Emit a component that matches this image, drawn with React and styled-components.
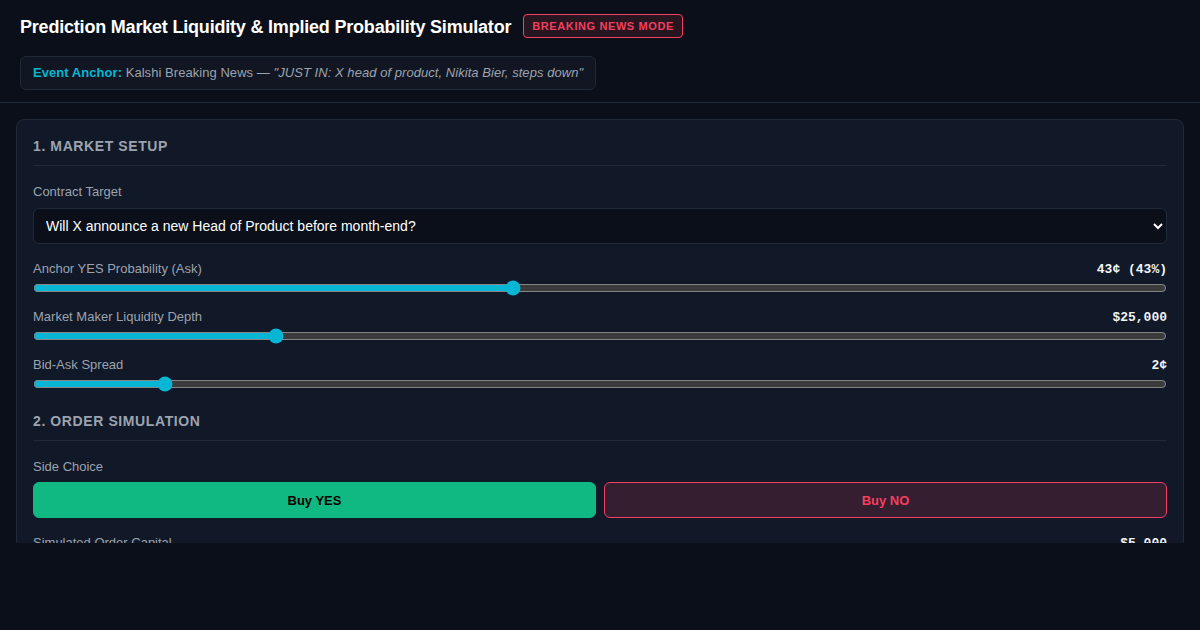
import React, { useState } from 'react';
import styled, { createGlobalStyle } from 'styled-components';

const GlobalStyle = createGlobalStyle`
  * { box-sizing: border-box; }
  body {
    margin: 0;
    background: #0b0f19;
    color: #e5e7eb;
    font-family: "Liberation Sans", Arial, sans-serif;
  }
`;

const App = () => {
  const [side, setSide] = useState('yes');
  const [prob, setProb] = useState(43);
  const [depth, setDepth] = useState(25000);
  const [spread, setSpread] = useState(2);

  return (
    <Page>
      <GlobalStyle />
      <Header>
        <TitleRow>
          <Title>Prediction Market Liquidity &amp; Implied Probability Simulator</Title>
          <Badge>BREAKING NEWS MODE</Badge>
        </TitleRow>
        <Anchor>
          <strong>Event Anchor:</strong> Kalshi Breaking News —{' '}
          <em>"JUST IN: X head of product, Nikita Bier, steps down"</em>
        </Anchor>
      </Header>
      <Main>
        <Panel>
          <SectionTitle>1. Market Setup</SectionTitle>
          <Field>
            <Label>Contract Target</Label>
            <Select defaultValue="a">
              <option value="a">Will X announce a new Head of Product before month-end?</option>
              <option value="b">Will Nikita Bier join another company by Q2?</option>
            </Select>
          </Field>
          <SliderField>
            <LabelRow>
              <Label>Anchor YES Probability (Ask)</Label>
              <Value>{prob}¢ ({prob}%)</Value>
            </LabelRow>
            <Range min={5} max={95} value={prob} onChange={e => setProb(+e.target.value)} />
          </SliderField>
          <SliderField>
            <LabelRow>
              <Label>Market Maker Liquidity Depth</Label>
              <Value>${depth.toLocaleString('en-US')}</Value>
            </LabelRow>
            <Range min={5000} max={100000} step={1000} value={depth} onChange={e => setDepth(+e.target.value)} />
          </SliderField>
          <SliderField>
            <LabelRow>
              <Label>Bid-Ask Spread</Label>
              <Value>{spread}¢</Value>
            </LabelRow>
            <Range min={1} max={10} value={spread} onChange={e => setSpread(+e.target.value)} />
          </SliderField>

          <SectionTitle $spaced>2. Order Simulation</SectionTitle>
          <Field $tight>
            <Label>Side Choice</Label>
            <SideRow>
              <SideButton $kind="yes" $active={side === 'yes'} onClick={() => setSide('yes')}>Buy YES</SideButton>
              <SideButton $kind="no" $active={side === 'no'} onClick={() => setSide('no')}>Buy NO</SideButton>
            </SideRow>
          </Field>
          <SliderField>
            <LabelRow>
              <Label>Simulated Order Capital</Label>
              <Value>$5,000</Value>
            </LabelRow>
            <Range min={100} max={20000} step={100} defaultValue={5000} />
          </SliderField>
        </Panel>
      </Main>
    </Page>
  );
};
export default App;

const Page = styled.div`
  min-height: 630px;
  background: #0b0f19;
`;

const Header = styled.header`
  padding: 14px 20px 12px;
  border-bottom: 1px solid #1f2937;
  display: flex;
  flex-direction: column;
  gap: 18px;
  align-items: flex-start;
`;

const TitleRow = styled.div`
  display: flex;
  align-items: center;
  gap: 12px;
  height: 24px;
`;

const Title = styled.h1`
  margin: 0;
  padding-top: 2px;
  font-size: 18px;
  font-weight: 700;
  letter-spacing: -0.2px;
  color: #ffffff;
`;

const Badge = styled.span`
  font-size: 11px;
  font-weight: 700;
  letter-spacing: 0.6px;
  line-height: 14px;
  color: #f43f5e;
  background: rgba(244, 63, 94, 0.12);
  border: 1px solid #f43f5e;
  border-radius: 4px;
  padding: 4px 8px;
`;

const Anchor = styled.div`
  font-size: 13px;
  line-height: 14px;
  letter-spacing: 0.05px;
  color: #9ca3af;
  background: #111622;
  border: 1px solid #1f2937;
  border-radius: 6px;
  padding: 9px 12px;

  strong { color: #06b6d4; }
  em { color: #9ca3af; }
`;

const Main = styled.main`
  height: 440px;
  overflow: hidden;
  padding: 16px;
`;

const Panel = styled.section`
  background: #111827;
  border: 1px solid #1f2937;
  border-radius: 8px;
  padding: 18px 16px 16px;
`;

const SectionTitle = styled.h2`
  margin: ${p => (p.$spaced ? '21px' : '0')} 0 18px;
  padding-bottom: 11px;
  border-bottom: 1px solid #1f2937;
  font-size: 14px;
  font-weight: 700;
  text-transform: uppercase;
  letter-spacing: 0.6px;
  color: #9ca3af;
`;

const Field = styled.div`
  display: flex;
  flex-direction: column;
  gap: ${p => (p.$tight ? '8px' : '9px')};
  margin-bottom: 17px;
`;

const SliderField = styled.div`
  display: flex;
  flex-direction: column;
  gap: 3px;
  margin-bottom: 13px;
`;

const LabelRow = styled.div`
  display: flex;
  justify-content: space-between;
  align-items: baseline;
`;

const Label = styled.label`
  font-size: 13px;
  color: #9ca3af;
`;

const Value = styled.span`
  font-family: "Liberation Mono", "DejaVu Sans Mono", monospace;
  font-size: 13px;
  font-weight: 700;
  color: #f3f4f6;
`;

const Select = styled.select`
  height: 36px;
  width: 100%;
  padding: 0 8px;
  font-family: "Liberation Sans", Arial, sans-serif;
  font-size: 14px;
  color: #ffffff;
  background: #0b0f19;
  border: 1px solid #1f2937;
  border-radius: 6px;
  color-scheme: dark;
`;

const Range = styled.input.attrs({ type: 'range' })`
  width: 100%;
  margin: 0;
  height: 16px;
  accent-color: #06b6d4;
`;

const SideRow = styled.div`
  display: grid;
  grid-template-columns: 1fr 1fr;
  gap: 8px;
`;

const SideButton = styled.button`
  height: 36px;
  border-radius: 6px;
  font-family: "Liberation Sans", Arial, sans-serif;
  font-size: 13px;
  font-weight: 700;
  cursor: pointer;
  border: 1px solid ${p => (p.$kind === 'yes' ? '#10b981' : '#f43f5e')};
  background: ${p => (p.$kind === 'yes' ? '#10b981' : '#351e2f')};
  color: ${p => (p.$kind === 'yes' ? '#000000' : '#f43f5e')};
`;
